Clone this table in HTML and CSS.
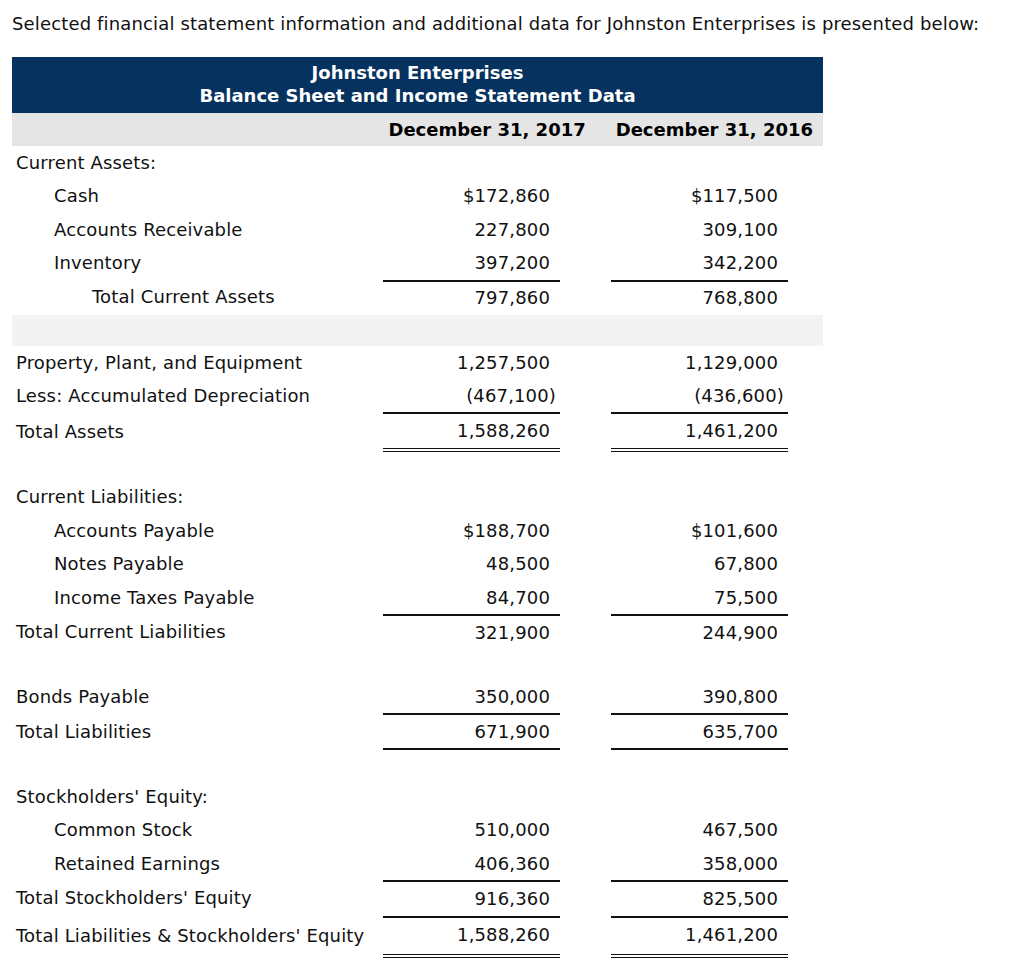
FILE: index.html
```html
<!DOCTYPE html>
<html>
<head>
<meta charset="utf-8">
<link rel="stylesheet" href="styles.css">
</head>
<body>
<div class="page">
  <p class="intro">Selected financial statement information and additional data for Johnston Enterprises is presented below:</p>
  <div class="sheet">
    <div class="title">
      <div>Johnston Enterprises</div>
      <div>Balance Sheet and Income Statement Data</div>
    </div>
    <div class="dates">
      <span>December 31, 2017</span>
      <span>December 31, 2016</span>
    </div>

    <div class="row r-first"><div class="lbl">Current Assets:</div><div class="num"></div><div></div><div class="num"></div></div>
    <div class="row"><div class="lbl in1">Cash</div><div class="num">$172,860</div><div></div><div class="num">$117,500</div></div>
    <div class="row"><div class="lbl in1">Accounts Receivable</div><div class="num">227,800</div><div></div><div class="num">309,100</div></div>
    <div class="row"><div class="lbl in1">Inventory</div><div class="num">397,200</div><div></div><div class="num">342,200</div></div>
    <div class="row row-tca"><div class="lbl in2">Total Current Assets</div><div class="num line">797,860</div><div></div><div class="num line">768,800</div></div>

    <div class="band"></div>

    <div class="row r33"><div class="lbl">Property, Plant, and Equipment</div><div class="num">1,257,500</div><div></div><div class="num">1,129,000</div></div>
    <div class="row r33"><div class="lbl">Less: Accumulated Depreciation</div><div class="num neg">(467,100)</div><div></div><div class="num neg">(436,600)</div></div>
    <div class="row row-ta"><div class="lbl">Total Assets</div><div class="num line dbl">1,588,260</div><div></div><div class="num line dbl">1,461,200</div></div>

    <div class="row sec sec-first"><div class="lbl">Current Liabilities:</div><div class="num"></div><div></div><div class="num"></div></div>
    <div class="row"><div class="lbl in1">Accounts Payable</div><div class="num">$188,700</div><div></div><div class="num">$101,600</div></div>
    <div class="row"><div class="lbl in1">Notes Payable</div><div class="num">48,500</div><div></div><div class="num">67,800</div></div>
    <div class="row"><div class="lbl in1">Income Taxes Payable</div><div class="num">84,700</div><div></div><div class="num">75,500</div></div>
    <div class="row row-lined"><div class="lbl">Total Current Liabilities</div><div class="num line">321,900</div><div></div><div class="num line">244,900</div></div>

    <div class="row sec"><div class="lbl">Bonds Payable</div><div class="num">350,000</div><div></div><div class="num">390,800</div></div>
    <div class="row row-under"><div class="lbl">Total Liabilities</div><div class="num line under">671,900</div><div></div><div class="num line under">635,700</div></div>

    <div class="row sec"><div class="lbl">Stockholders' Equity:</div><div class="num"></div><div></div><div class="num"></div></div>
    <div class="row"><div class="lbl in1">Common Stock</div><div class="num">510,000</div><div></div><div class="num">467,500</div></div>
    <div class="row"><div class="lbl in1">Retained Earnings</div><div class="num">406,360</div><div></div><div class="num">358,000</div></div>
    <div class="row row-lined"><div class="lbl">Total Stockholders' Equity</div><div class="num line">916,360</div><div></div><div class="num line">825,500</div></div>
    <div class="row row-last"><div class="lbl">Total Liabilities &amp; Stockholders' Equity</div><div class="num line dbl">1,588,260</div><div></div><div class="num line dbl">1,461,200</div></div>
  </div>
</div>
</body>
</html>
```

FILE: styles.css
```css
html, body {
  margin: 0;
  padding: 0;
  background: #ffffff;
}

.page {
  padding: 12px 0 0 12px;
  font-family: "DejaVu Sans", Verdana, sans-serif;
  font-size: 18px;
  letter-spacing: 0.15px;
  color: #111111;
}

.intro {
  margin: 0;
  line-height: 24px;
  white-space: nowrap;
}

.sheet {
  margin-top: 21px;
  width: 811px;
}

.title {
  background: #06325f;
  color: #ffffff;
  font-weight: bold;
  text-align: center;
  line-height: 23px;
  padding: 4px 0 6px;
  height: 46px;
  letter-spacing: 0;
}

.dates {
  background: #e5e5e5;
  display: flex;
  justify-content: flex-end;
  align-items: center;
  gap: 30px;
  padding-right: 10px;
  height: 32.5px;
  font-weight: bold;
  color: #000000;
  letter-spacing: 0;
}

.row {
  display: grid;
  grid-template-columns: 371px 177px 51px 177px 35px;
  height: 33.5px;
}

.row > div {
  display: flex;
  align-items: center;
  box-sizing: border-box;
}

.lbl {
  padding-left: 4px;
  white-space: nowrap;
}

.lbl.in1 { padding-left: 42px; }
.lbl.in2 { padding-left: 80px; }

.num {
  justify-content: flex-end;
  padding-right: 10px;
  white-space: nowrap;
}

.num.neg { padding-right: 4px; }

.num.line { border-top: 2px solid #111111; }
.num.dbl { border-bottom: 4px double #111111; }
.num.under { border-bottom: 2px solid #111111; }

.row-tca { height: 34px; }
.r33 { height: 33px; }
.row-ta { height: 40.5px; }
.row-lined { height: 35.5px; }
.row-under { height: 36.5px; }
.row-last { height: 42px; }
.row-last > div { padding-bottom: 3px; }

.band {
  background: #f3f3f3;
  height: 30.5px;
  margin-top: 1.5px;
}

.sec { margin-top: 30px; }
.sec.sec-first { margin-top: 28px; }
```
